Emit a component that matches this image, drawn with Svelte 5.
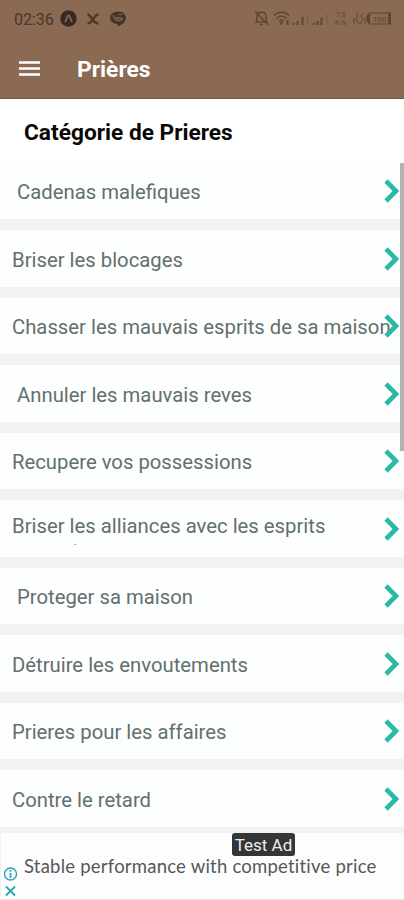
<script>
    let title = $state("Prières");

    const categories = [
        { name: "Cadenas malefiques", indent: true },
        { name: "Briser les blocages" },
        { name: "Chasser les mauvais esprits de sa maison" },
        { name: "Annuler les mauvais reves", indent: true },
        { name: "Recupere vos possessions" },
        { name: "Briser les alliances avec les esprits", mark: true },
        { name: "Proteger sa maison", indent: true },
        { name: "Détruire les envoutements" },
        { name: "Prieres pour les affaires" },
        { name: "Contre le retard" }
    ];
</script>

<div class="screen">
    <header>
        <div class="statusBar">
            <span class="clock">02:36</span>
            <svg class="appIcons" width="68" height="18" viewBox="0 0 68 18">
                <circle cx="8.5" cy="8.500" r="8.200" fill="#372a22"/>
                <path d="M5.200 12 8 5.500h1.200l2.800 6.500" fill="none" stroke="#8a6a52" stroke-width="1.700"/>
                <path d="M27.500 4.500c4 0 4.500 9 11 9M38.500 4.500c-5 0-5 9-11 9" fill="none" stroke="#4a382d" stroke-width="2.300"/>
                <path d="M58 1.500c4.500 0 8 2.800 8 6.400 0 3.600-4 6.600-8.500 8.600v-2.600c-4.200-.3-7.500-2.700-7.500-6s3.500-6.400 8-6.400Z" fill="#453329"/>
                <path d="M53.500 5c0 4 3 6 7 5.500l2-1.500-2.500-1.500-1.500 1c-1.500 0-2-1-2-2M58.500 4.500h4" fill="none" stroke="#8a6a52" stroke-width="1.200"/>
            </svg>
            <svg class="phoneIcons" width="140" height="20" viewBox="0 0 140 20" fill="none" stroke="#5d4535">
                <path d="M4 12.500V7c0-5 9-5 9 0v5.500M2 13h13M7 15.500h3M2 2l13 14" stroke-width="1.500"/>
                <path d="M21 6.500c4-4.500 11-4.500 15 0M23.500 9.500c3-3 7-3 10 0M26 12c2-1.500 3-1.500 5 0" stroke-width="1.500"/>
                <path d="M28.500 12.500v3" stroke-width="2.500"/>
                <path d="M34.500 11v5M40.500 14v2M44.500 12v4M49.500 7.500v8.500M60.500 14v2M64.500 12v4M68.500 8.500v7.500" stroke-width="2"/>
                <path d="M54.500 6v10M74 5v11" stroke-width=".8" opacity=".5"/>
                <text x="83" y="8" class="speed">7.8</text>
                <text x="82" y="16" class="speed">K/s</text>
                <path d="M103 4l2 3-2 3 3 5M110 4l-2 3 2 3-3 5M101 9v6M112 9v6" stroke-width="1"/>
                <path d="M117 4h20v11h-20l-3-3V7Z" stroke-width="1.200"/>
                <path d="M117 4v11l-3-3V7ZM135 4h3v11h-3z" fill="#5d4535" stroke="none"/>
                <text x="120" y="13" class="level">100</text>
            </svg>
        </div>
        <div class="toolbar">
            <svg class="menuIcon" width="21" height="15" viewBox="0 0 21 15">
                <path d="M0 1.500h21M0 7.500h21M0 13.500h21" stroke="#fff" stroke-width="2.400"/>
            </svg>
            <h1>{title}</h1>
        </div>
    </header>

    <h2>Catégorie de Prieres</h2>

    <div class="list">
        {#each categories as category}
            <div class="row">
                <div class="rowText" class:indent={category.indent}>
                    {category.name}
                    {#if category.mark}
                        <div class="mark">.</div>
                    {/if}
                </div>
                <svg class="chevron" width="16" height="24" viewBox="0 0 16 24">
                    <path d="M2 2l10 10L2 22" fill="none" stroke="#2bb9a3" stroke-width="4.600"/>
                </svg>
            </div>
        {/each}
        <div class="scrollThumb"></div>
    </div>

    <div class="ad">
        <svg class="adIcons" width="14" height="32" viewBox="0 0 14 32" fill="none" stroke="#2ba4b8" stroke-width="1.400">
            <circle cx="6.500" cy="7" r="6"/>
            <path d="M6.500 6v5M6.500 3v1.700" stroke-width="1.700"/>
            <path d="M2 19.500l9 9M11 19.500l-9 9" stroke-width="1.800"/>
        </svg>
        <div class="adText">Stable performance with competitive price</div>
        <div class="adBadge">Test Ad</div>
    </div>
</div>

<style>
    :global(body) {
        margin: 0;
    }
    .screen {
        width: 404px;
        height: 900px;
        overflow: hidden;
        display: flex;
        flex-direction: column;
        background-color: #f1f2f4;
        font-family: Roboto, sans-serif;
    }
    header {
        height: 99px;
        flex: none;
        box-sizing: border-box;
        background-color: #8a6a52;
        border-bottom: 1px solid #795a46;
    }
    .statusBar {
        display: flex;
        align-items: center;
        height: 38px;
        padding: 0 11px 0 14px;
    }
    .clock {
        width: 46px;
        font-size: 16px;
        color: #49372c;
    }
    .phoneIcons {
        margin-left: auto;
    }
    .speed {
        font-size: 7px;
        fill: #5d4535;
        stroke: none;
    }
    .level {
        font-size: 8px;
        fill: #5d4535;
        stroke: none;
    }
    .toolbar {
        display: flex;
        align-items: center;
        height: 60px;
        padding-left: 19px;
        gap: 37px;
    }
    h1 {
        margin: 3px 0 0;
        font-size: 22.8px;
        font-weight: 700;
        color: #fff;
    }
    h2 {
        flex: none;
        box-sizing: border-box;
        height: 63.5px;
        margin: 0;
        padding: 3px 0 0 24px;
        line-height: 62px;
        font-size: 22.7px;
        font-weight: 700;
        color: #080808;
        background-color: #fff;
    }
    .list {
        position: relative;
        flex: none;
        height: 670.5px;
        display: flex;
        flex-direction: column;
        gap: 11px;
    }
    .row {
        flex: none;
        display: flex;
        align-items: center;
        height: 56.5px;
        background-color: #fdfefe;
    }
    .rowText {
        flex: 1;
        width: 0;
        padding: 3px 0 0 12px;
        font-size: 20.3px;
        line-height: 24px;
        white-space: nowrap;
        color: #62706d;
    }
    .indent {
        padding-left: 17px;
    }
    .mark {
        height: 7px;
        padding-left: 62px;
        font-size: 10px;
        line-height: 7px;
    }
    .chevron {
        flex: none;
        margin: 1px 4px 0 0;
        /* long names run underneath the arrow */
        z-index: 1;
    }
    .scrollThumb {
        position: absolute;
        right: 0;
        top: 0.5px;
        width: 4px;
        height: 288px;
        background-color: #b3b3b4;
    }
    .ad {
        position: relative;
        flex: 1;
        display: flex;
        align-items: center;
        box-sizing: border-box;
        padding-left: 3px;
        gap: 6px;
        background-color: #fdfdfd;
        border-left: 1px solid #f1f2f4;
        border-bottom: 1px solid #e9eaeb;
    }
    .adIcons {
        align-self: flex-end;
    }
    .adText {
        font-family: Lato, sans-serif;
        font-size: 18.5px;
        letter-spacing: 0.22px;
        color: #55585a;
        white-space: nowrap;
    }
    .adBadge {
        position: absolute;
        left: 231px;
        top: 0;
        width: 63px;
        height: 23px;
        line-height: 24px;
        border-radius: 3px;
        text-align: center;
        font-size: 17px;
        color: #eee;
        background-color: #353535;
    }
</style>
